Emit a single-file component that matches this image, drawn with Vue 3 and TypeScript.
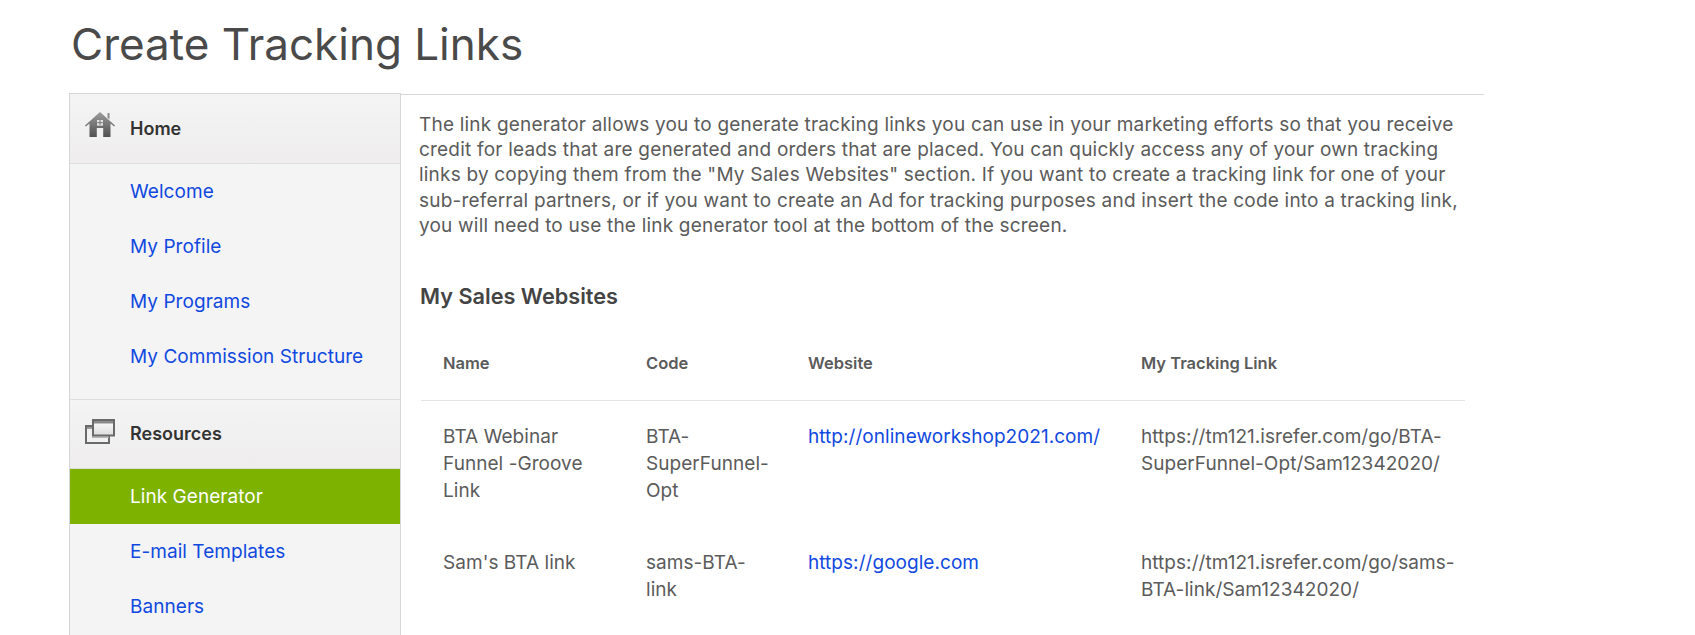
<template>
  <div class="page">
    <h1 class="title">Create Tracking Links</h1>
    <div class="layout">
      <!-- Sidebar -->
      <nav class="sidebar">
        <div v-for="group in navGroups" :key="group.label" class="nav-group">
          <div class="nav-head">
            <svg v-if="group.icon === 'home'" class="nav-icon home-icon" viewBox="0 0 30 25">
              <defs>
                <linearGradient id="homeFill" x1="0" y1="0" x2="0" y2="1">
                  <stop offset="0" stop-color="#9c9c9c" />
                  <stop offset="1" stop-color="#505050" />
                </linearGradient>
              </defs>
              <path d="M22.5 1h2v6.6l-2-1.8z" fill="#8a8a8a" />
              <path fill-rule="evenodd" fill="url(#homeFill)" d="M15 0 30 13.5 29.2 14.6 25.5 11.4V25H18.2v-9h-6.4v9H4.5V11.4L0.8 14.6 0 13.5zM12.2 8v5.4h5.6V8z" />
              <path d="M12.2 8h5.6v5.4h-5.6z" fill="#e4e4e4" />
              <path d="M15 8v5.4M12.2 10.7h5.6" stroke="#777" stroke-width="1" />
            </svg>
            <svg v-else class="nav-icon res-icon" viewBox="0 0 30 25">
              <defs>
                <linearGradient id="winFill" x1="0" y1="0" x2="0" y2="1">
                  <stop offset="0" stop-color="#ffffff" />
                  <stop offset="1" stop-color="#dcdcdc" />
                </linearGradient>
              </defs>
              <path d="M1 7h23v17H1z" fill="#f1f1f1" stroke="#6a6a6a" stroke-width="2" />
              <path d="M2 8h5v2H2z" fill="#9a9a9a" />
              <path d="M7 17.5h17v1.5H7z" fill="#b5b5b5" />
              <path d="M8 1h21v15.5H8z" fill="url(#winFill)" stroke="#6a6a6a" stroke-width="2" />
              <path d="M9 2h19v2.5H9z" fill="#8a8a8a" />
            </svg>
            <span>{{ group.label }}</span>
          </div>
          <a
            v-for="item in group.items"
            :key="item"
            :class="['nav-item', { active: item === activeItem }]"
            href="#"
          >{{ item }}</a>
        </div>
      </nav>

      <!-- Main content -->
      <main class="content">
        <p class="intro">
          The link generator allows you to generate tracking links you can use in your marketing efforts so that you receive<br />
          credit for leads that are generated and orders that are placed. You can quickly access any of your own tracking<br />
          links by copying them from the "My Sales Websites" section. If you want to create a tracking link for one of your<br />
          sub-referral partners, or if you want to create an Ad for tracking purposes and insert the code into a tracking link,<br />
          you will need to use the link generator tool at the bottom of the screen.
        </p>
        <h2 class="section-title">My Sales Websites</h2>
        <table class="sites">
          <thead>
            <tr>
              <th class="col-name">Name</th>
              <th class="col-code">Code</th>
              <th class="col-web">Website</th>
              <th>My Tracking Link</th>
            </tr>
          </thead>
          <tbody>
            <tr v-for="site in sites" :key="site.code">
              <td>{{ site.name }}</td>
              <td>{{ site.code }}</td>
              <td><a href="#">{{ site.url }}</a></td>
              <td>{{ site.link }}</td>
            </tr>
          </tbody>
        </table>
      </main>
    </div>
  </div>
</template>

<script setup lang="ts">
const activeItem = 'Link Generator'

const navGroups = [
  { label: 'Home', icon: 'home', items: ['Welcome', 'My Profile', 'My Programs', 'My Commission Structure'] },
  { label: 'Resources', icon: 'resources', items: ['Link Generator', 'E-mail Templates', 'Banners'] },
]

const sites = [
  {
    name: 'BTA Webinar Funnel -Groove Link',
    code: 'BTA-SuperFunnel-Opt',
    url: 'http://onlineworkshop2021.com/',
    link: 'https://tm121.isrefer.com/go/BTA-SuperFunnel-Opt/Sam12342020/',
  },
  {
    name: "Sam's BTA link",
    code: 'sams-BTA-link',
    url: 'https://google.com',
    link: 'https://tm121.isrefer.com/go/sams-BTA-link/Sam12342020/',
  },
]
</script>

<style>
html, body {
  margin: 0;
  height: 635px;
  overflow: hidden;
  background: #fff;
}
</style>

<style scoped>
.page {
  width: 1484px;
  height: 635px;
  box-sizing: border-box;
  padding-left: 69px;
  overflow: hidden;
  font-family: Inter, "Liberation Sans", sans-serif;
  color: #5b5b5b;
}

.title {
  margin: 0;
  padding: 14px 0 0 2px;
  height: 93px;
  box-sizing: border-box;
  font-size: 44px;
  line-height: 60px;
  font-weight: 400;
  color: #4a4a4a;
}

.layout {
  display: flex;
  align-items: stretch;
  height: 542px;
}

.sidebar {
  width: 332px;
  flex: none;
  box-sizing: border-box;
  border: 1px solid #d6d6d6;
  border-bottom: none;
  background: #f4f4f5;
}

.nav-head {
  display: flex;
  align-items: center;
  height: 70px;
  box-sizing: border-box;
  padding: 0 0 1px 60px;
  position: relative;
  background: linear-gradient(#f4f4f5, #efedee);
  border-bottom: 1px solid #dedede;
  font-size: 18px;
  font-weight: 600;
  color: #333;
}

.nav-group + .nav-group {
  margin-top: 15px;
  border-top: 1px solid #dedede;
}

.nav-group + .nav-group .nav-head {
  height: 69px;
  padding-bottom: 2px;
}

.nav-icon {
  position: absolute;
}

.home-icon {
  left: 15px;
  top: 18px;
  width: 30px;
  height: 25px;
}

.res-icon {
  left: 15px;
  top: 19px;
  width: 30px;
  height: 25px;
}

.nav-item {
  display: flex;
  align-items: center;
  height: 55px;
  padding-left: 60px;
  font-size: 19px;
  letter-spacing: 0.05px;
  color: #1049e0;
  text-decoration: none;
}

.nav-item.active {
  background: #7db200;
  color: #fff;
}

.content {
  flex: 1;
  min-width: 0;
  border-top: 1px solid #d6d6d6;
  margin-top: 1px;
  padding: 17px 18px 0 18px;
}

.intro {
  margin: 0;
  font-size: 19px;
  letter-spacing: 0.2px;
  line-height: 25.2px;
  white-space: nowrap;
}

.section-title {
  margin: 43px 0 0 1px;
  font-size: 21.7px;
  line-height: 30px;
  font-weight: 600;
  color: #444;
}

.sites {
  margin: 21px 0 0 2px;
  width: 1044px;
  border-collapse: collapse;
  table-layout: fixed;
  font-size: 19px;
  letter-spacing: 0.05px;
  line-height: 27px;
}

.sites th {
  padding: 18px 15px 23px 22px;
  text-align: left;
  font-size: 16.5px;
  font-weight: 600;
  letter-spacing: 0;
  border-bottom: 1px solid #e4e4e4;
}

.col-name { width: 203px; box-sizing: border-box; }
.col-code { width: 162px; box-sizing: border-box; }
.col-web { width: 333px; box-sizing: border-box; }

.sites td {
  padding: 22px 15px 23px 22px;
  vertical-align: top;
  overflow-wrap: anywhere;
}

.sites td:last-child {
  padding-right: 6px;
}

.sites td a {
  color: #1049e0;
  text-decoration: none;
}
</style>
